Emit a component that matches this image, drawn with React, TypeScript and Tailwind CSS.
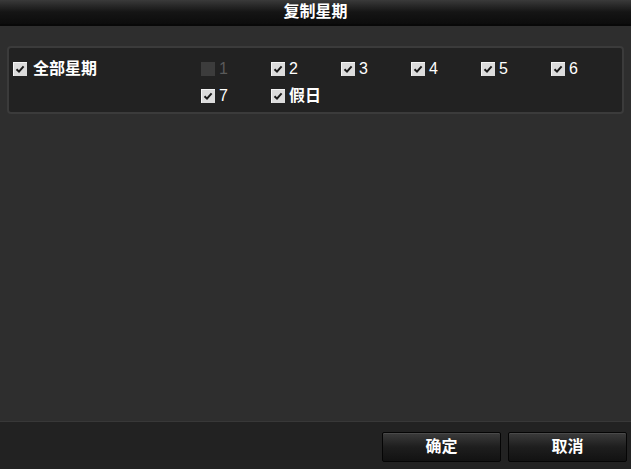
import { useState } from 'react'

type Day = {
  label: string
  checked: boolean
  disabled?: boolean
}

const initialDays: Day[] = [
  { label: '1', checked: false, disabled: true },
  { label: '2', checked: true },
  { label: '3', checked: true },
  { label: '4', checked: true },
  { label: '5', checked: true },
  { label: '6', checked: true },
  { label: '7', checked: true },
  { label: '假日', checked: true }
]

function Check({ checked, disabled }: { checked: boolean; disabled?: boolean }) {
  if (disabled) {
    return <span className="block h-[14px] w-[14px] bg-[#3c3c3c]" />
  }
  return (
    <span className="flex h-[14px] w-[14px] items-center justify-center bg-[#dcdcdc] shadow-[inset_1px_1px_0_#f4f4f4]">
      {checked && (
        <svg width="10" height="10" viewBox="0 0 10 10">
          <path d="M1.5 5.2 L4 7.6 L8.6 2.4" fill="none" stroke="#1a1a1a" strokeWidth="2" />
        </svg>
      )}
    </span>
  )
}

export default function App() {
  const [days, setDays] = useState(initialDays)
  const allChecked = days.filter((d) => !d.disabled).every((d) => d.checked)

  const toggle = (index: number) => {
    setDays((prev) => prev.map((d, i) => (i === index && !d.disabled ? { ...d, checked: !d.checked } : d)))
  }

  const toggleAll = () => {
    setDays((prev) => prev.map((d) => (d.disabled ? d : { ...d, checked: !allChecked })))
  }

  return (
    <div
      className="flex h-[469px] w-[631px] flex-col bg-[#2e2e2e] text-white"
      style={{ fontFamily: '"Liberation Sans", "Noto Sans CJK SC", sans-serif' }}
    >
      <div className="flex h-[26px] shrink-0 items-center justify-center border-b-2 border-[#080808] bg-gradient-to-b from-[#3a3a3a] via-[#151515] to-[#0c0c0c]">
        <span className="text-[16px] font-bold leading-none">复制星期</span>
      </div>

      <div className="flex-1 px-[7px] pt-[20px]">
        <div className="flex h-[68px] items-start rounded-[4px] border-2 border-[#3b3b3b] bg-[#222222] pl-[4px] pt-[12px]">
          <button onClick={toggleAll} className="flex h-[18px] w-[188px] items-center gap-[6px]">
            <Check checked={allChecked} />
            <span className="text-[16px] font-bold leading-none">全部星期</span>
          </button>
          <div className="grid grid-cols-[repeat(6,70px)] content-start gap-y-[9px]">
            {days.map((day, i) => {
              const cjk = /[^\x00-\x7f]/.test(day.label)
              return (
                <button
                  key={day.label}
                  onClick={() => toggle(i)}
                  className="flex h-[18px] items-center gap-[4px]"
                >
                  <Check checked={day.checked} disabled={day.disabled} />
                  <span
                    className={`text-[16px] leading-none ${cjk ? 'font-bold' : 'font-normal'} ${
                      day.disabled ? 'text-[#5a5a5a]' : 'text-white'
                    }`}
                  >
                    {day.label}
                  </span>
                </button>
              )
            })}
          </div>
        </div>
      </div>

      <div className="flex h-[48px] shrink-0 items-start justify-end gap-[7px] border-t border-[#383838] bg-[#222222] pr-[4px] pt-[10px]">
        {['确定', '取消'].map((label) => (
          <button
            key={label}
            className="flex h-[30px] w-[119px] items-center justify-center rounded-[2px] border border-[#050505] bg-gradient-to-b from-[#3c3c3c] via-[#1e1e1e] to-[#121212] shadow-[inset_0_1px_0_#4a4a4a]"
          >
            <span className="text-[16px] font-bold leading-none">{label}</span>
          </button>
        ))}
      </div>
    </div>
  )
}
